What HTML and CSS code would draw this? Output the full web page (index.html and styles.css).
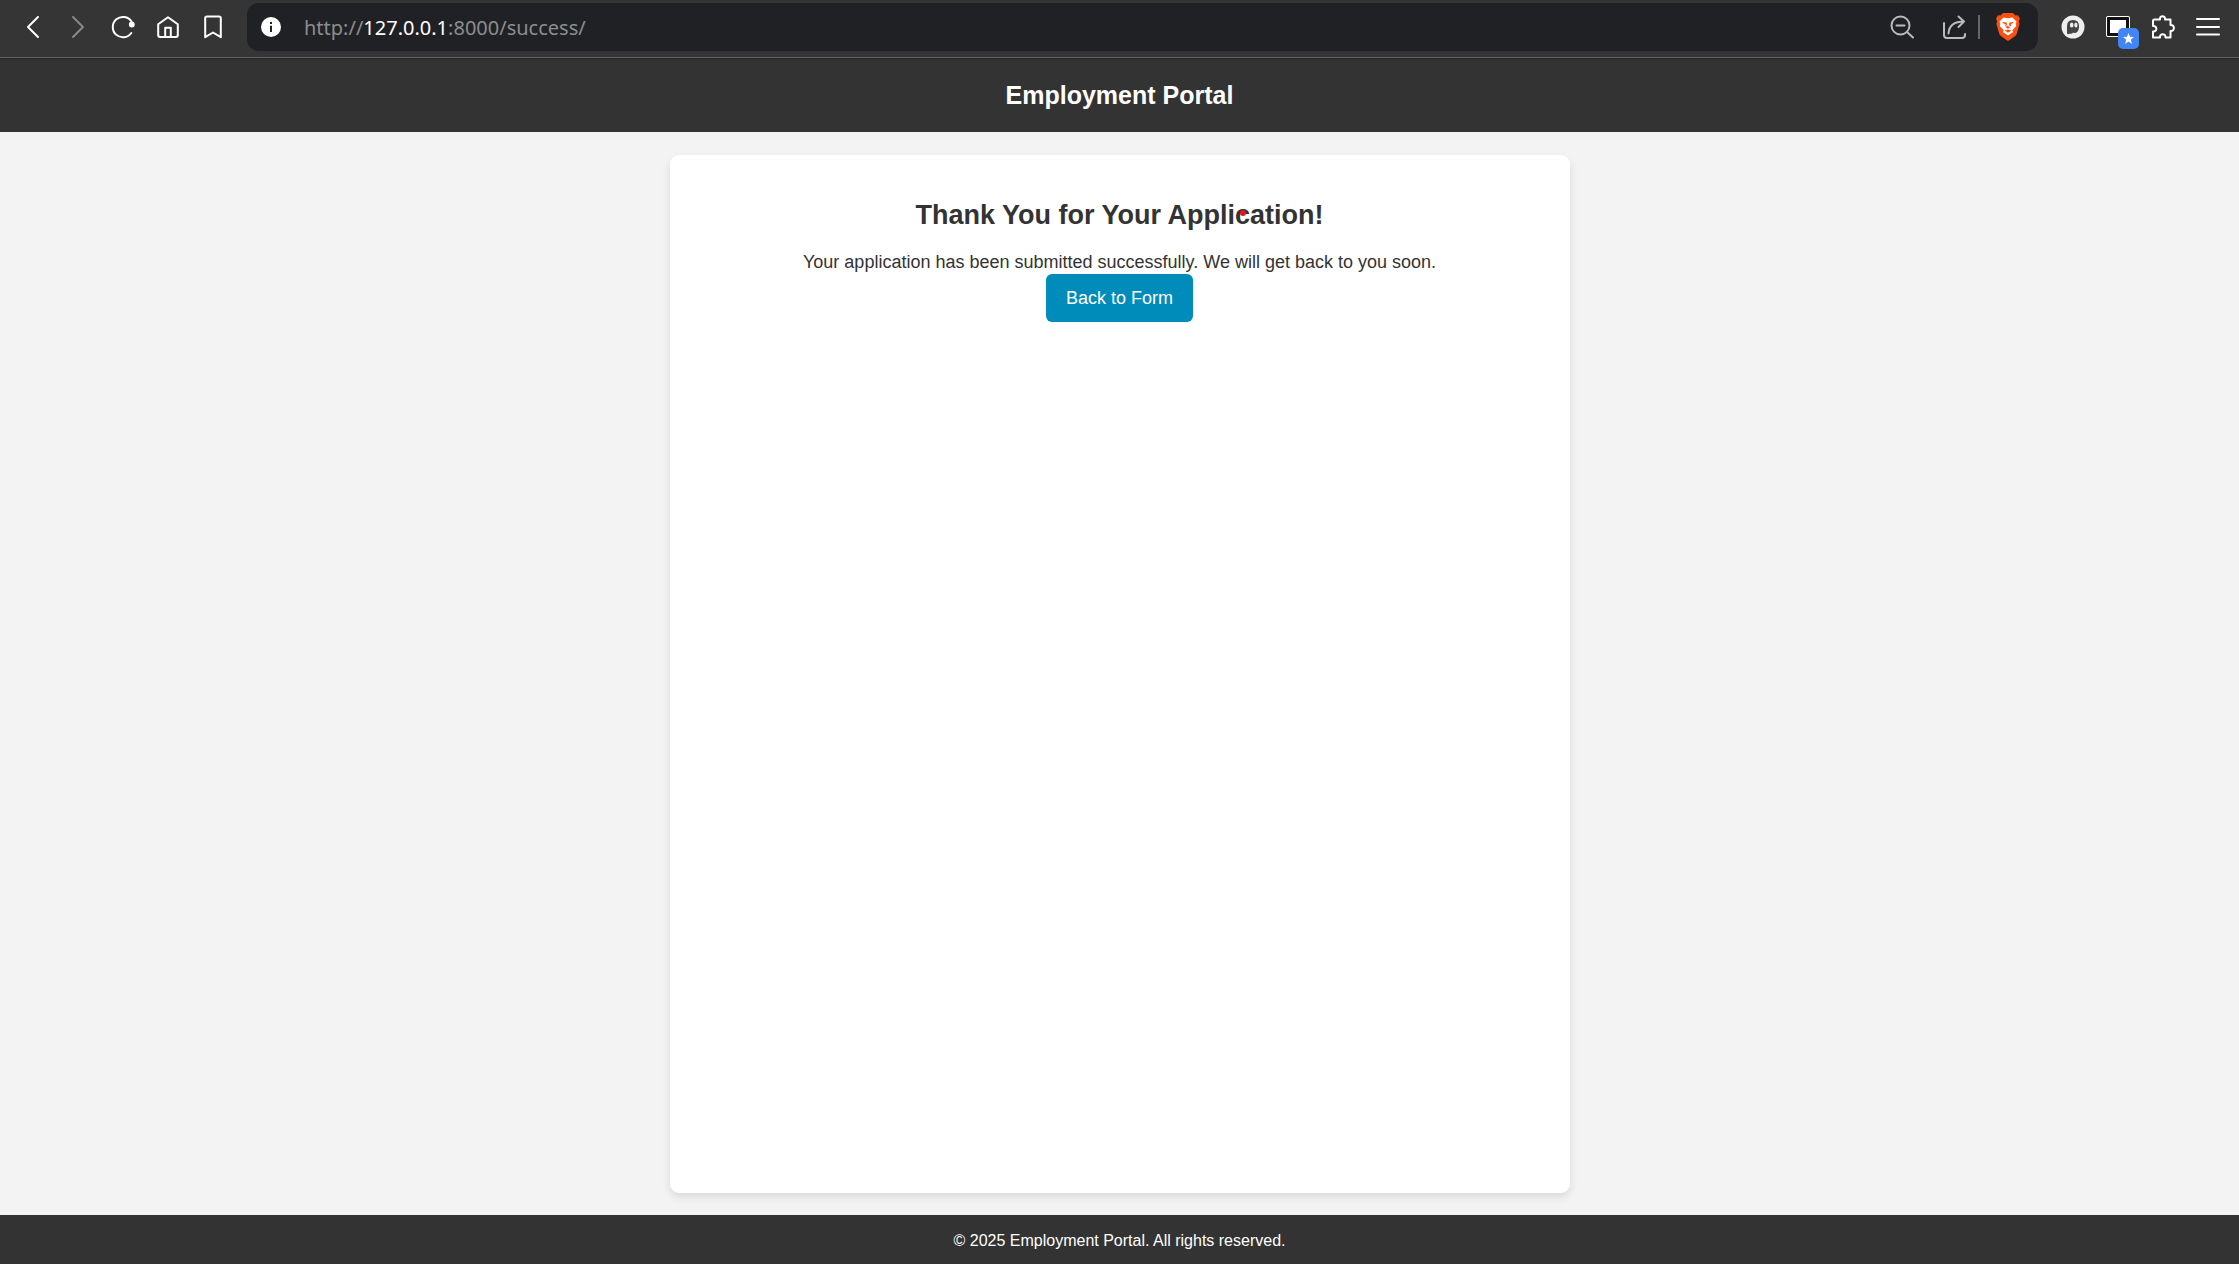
FILE: index.html
```html
<!DOCTYPE html>
<html lang="en">
<head>
<meta charset="utf-8">
<title>Employment Portal</title>
<link rel="stylesheet" href="styles.css">
</head>
<body>
<div class="toolbar">
  <nav class="tools" aria-label="Navigation">
    <button class="tool" aria-label="Back"><svg width="24" height="24" viewBox="0 0 24 24"><path d="M17 2 7 12l10 10"/></svg></button>
    <button class="tool tool-off" aria-label="Forward"><svg width="24" height="24" viewBox="0 0 24 24"><path d="m7 2 10 10L7 22"/></svg></button>
    <button class="tool" aria-label="Reload"><svg width="24" height="24" viewBox="0 0 24 24"><path d="M20.500 6.500A10.200 10.200 0 1 0 20.300 18"/><circle class="solid" cx="20.800" cy="9.500" r="2.900"/></svg></button>
    <button class="tool" aria-label="Home"><svg width="24" height="24" viewBox="0 0 24 24"><path d="M2.200 9.200 12 2.200l9.800 7V20q0 2-2 2H4.200q-2 0-2-2zM9.200 22v-9.300h5.600V22"/></svg></button>
    <button class="tool" aria-label="Bookmark"><svg width="24" height="24" viewBox="0 0 24 24"><path d="M6 1.500h12q1.800 0 1.800 1.800v18.900L12 17.500l-7.800 4.700V3.300Q4.200 1.500 6 1.500z"/></svg></button>
  </nav>
  <div class="address">
    <button class="site" aria-label="Site information"><svg class="filled" width="20" height="20" viewBox="0 0 20 20"><circle cx="10" cy="10" r="10" fill="#fff"/><path fill="#202124" d="M9 8.800h2V15H9zM9 5h2v2H9z"/></svg></button>
    <div class="url" role="textbox" aria-label="Address" contenteditable="true" spellcheck="false">http://<span class="host">127.0.0.1</span>:8000/success/</div>
    <button class="action" aria-label="Zoom out"><svg width="24" height="24" viewBox="0 0 24 24"><circle cx="10.500" cy="10.500" r="9"/><path d="m17 17 6 5.500M6.500 10.500h8"/></svg></button>
    <button class="action" aria-label="Share"><svg width="24" height="24" viewBox="0 0 24 24"><path d="M2 8v12q0 3 3 3h15q3 0 3-3v-1M6.500 18.500C7 11 11 6.500 22 6.500M16.500 1.500l5.500 5-5.500 5.500"/></svg></button>
    <span class="divider"></span>
    <button class="action" aria-label="Brave Shields"><svg class="filled" width="24" height="28" viewBox="0 0 24 28"><path fill="#fb5010" d="M7 0h10l2.500 2.500 2.500-.2 2 3.500-1.200 2.500.8 2.500-3 10.500Q19.500 23.500 12 28 4.500 23.500 3.400 21.300L.4 10.800l.8-2.500L0 5.800l2-3.500 2.500.2z"/><path fill="#fff" d="m7.500 4.500 4.500.8 4.500-.8 4 4-.8 2.500.5 2-4 4.500 1 1.500-5.200 3.500L6.800 19l1-1.500-4-4.500.5-2-.8-2.500z"/><path fill="#fb5010" d="m5.500 8.800 5 .8.500 1.500-.8 3.700 1.800 1 1.800-1-.8-3.700.5-1.500 5-.8-3.800 2.700.3 1.600-2.300.4M5.500 8.800l3.800 2.700-.3 1.600 2.300.4M8.700 17.500l3.300-1 3.300 1-3.300 2.200z"/></svg></button>
  </div>
  <nav class="tools" aria-label="Extensions">
    <button class="tool" aria-label="Ghost extension"><svg class="filled" width="24" height="24" viewBox="0 0 24 24"><circle cx="12" cy="12" r="11.500" fill="#eee"/><path fill="#444" d="M6 18.500V11q0-6 6-6t6 6q0 3.500-1 5-2 3-5 1.500-1 2-3 1-1.500 1.500-3 0z"/><ellipse cx="10.700" cy="10" rx="1.800" ry="2.600" fill="#eee"/><ellipse cx="14.900" cy="10" rx="1.600" ry="2.600" fill="#eee"/></svg></button>
    <button class="tool" aria-label="Window extension"><svg class="filled" width="24" height="24" viewBox="0 0 24 24"><path fill="#fff" d="M2 1h20q2 0 2 2v17q0 2-2 2H2q-2 0-2-2V3q0-2 2-2z"/><path fill="#111" d="M2 2h20q1 0 1 1v17q0 1-1 1H2q-1 0-1-1V3q0-1 1-1z"/><path fill="#fff" d="M4 5h16v13H4z"/></svg><span class="badge"><svg class="filled" width="11" height="11" viewBox="0 0 12 12"><path fill="#fff" d="m6 0 1.600 4.100 4.400.3-3.400 2.800L9.700 12 6 9.300 2.300 12l1.100-4.800L0 4.400l4.400-.3z"/></svg></span></button>
    <button class="tool" aria-label="Extensions"><svg width="24" height="24" viewBox="0 0 24 24"><path d="M3.500 4.500H9C8.300 0 14.700 0 14 4.500h5.500V10c4.500-.5 4.500 6.500 0 6v6.500H14.500c.5-4.500-6-4.500-5.500 0H2v-6c4.500.5 4.500-6 0-5.500V6q0-1.500 1.500-1.500z"/></svg></button>
    <button class="tool" aria-label="Menu"><svg width="24" height="24" viewBox="0 0 24 24"><path d="M1 4h22M1 12h22M1 19.500h22"/></svg></button>
  </nav>
</div>
<header class="header"><h1 class="brand">Employment Portal</h1></header>
<main class="card">
  <h2 class="title">Thank You for Your Application!</h2>
  <p class="message">Your application has been submitted successfully. We will get back to you soon.</p>
  <a class="back" href="/">Back to Form</a>
  <span class="pointer"></span>
</main>
<footer class="footer">© 2025 Employment Portal. All rights reserved.</footer>
</body>
</html>
```
FILE: styles.css
```css
* { box-sizing: border-box; }

body {
  margin: 0;
  min-height: 100vh;
  display: flex;
  flex-direction: column;
  background: #f3f3f3;
  color: #333;
  font-family: Arial, "Liberation Sans", sans-serif;
}

button {
  border: 0;
  padding: 0;
  background: none;
  color: inherit;
  font: inherit;
}

svg {
  fill: none;
  stroke: currentColor;
  stroke-width: 2;
  stroke-linejoin: round;
  stroke-linecap: round;
}
.filled { stroke: none; }
.solid { fill: currentColor; stroke: none; }

.toolbar {
  display: flex;
  gap: 12px;
  padding: 3px 9px 6px 10px;
  background: #353535;
  border-bottom: 1px solid #666;
  color: #fff;
}
.tools { display: flex; }
.tool {
  position: relative;
  width: 45px;
  display: flex;
  align-items: center;
  justify-content: center;
}
.tool-off { color: #888; }
.badge {
  position: absolute;
  right: 1px;
  bottom: 2px;
  width: 21px;
  height: 21px;
  border-radius: 5px;
  background: #4285f4;
  display: flex;
  align-items: center;
  justify-content: center;
}

.address {
  flex: 1;
  height: 48px;
  display: flex;
  align-items: center;
  padding-right: 6px;
  border-radius: 12px;
  background: #202124;
}
.site {
  width: 48px;
  height: 48px;
  display: flex;
  align-items: center;
  justify-content: center;
}
.url {
  flex: 1;
  padding: 1px 0 0 9px;
  color: #8b8d90;
  font-family: "Noto Sans", sans-serif;
  font-size: 20px;
  line-height: 28px;
}
.host { color: #fff; }
.action {
  width: 48px;
  height: 48px;
  margin-left: 4px;
  display: flex;
  align-items: center;
  justify-content: center;
  color: #bbb;
}
.divider {
  width: 2px;
  height: 24px;
  background: #666;
}

.header {
  padding: 20px;
  background: #333;
  border-top: 1px solid #222;
  color: #fff;
  text-align: center;
}
.brand {
  margin: 0;
  font-size: 25px;
  line-height: 33px;
}

.card {
  position: relative;
  flex: 1;
  width: 100%;
  max-width: 900px;
  margin: 23px auto 22px;
  padding: 43px 20px;
  border-radius: 9px;
  background: #fff;
  box-shadow: 0 4px 9px rgba(0, 0, 0, 0.1);
  text-align: center;
}
.title {
  margin: 0 0 19px;
  font-size: 27px;
  line-height: 34px;
}
.message {
  margin: 0;
  font-size: 18px;
  line-height: 23px;
}
.back {
  display: inline-block;
  padding: 12px 20px;
  border-radius: 6px;
  background: #008cba;
  color: #fff;
  font-size: 18px;
  line-height: 24px;
  text-decoration: none;
}
.pointer {
  position: absolute;
  top: 55px;
  left: calc(50% + 120px);
  width: 6px;
  height: 6px;
  border-radius: 50%;
  background: #e8141c;
}

.footer {
  padding: 15px 14px 13px;
  background: #333;
  color: #fff;
  font-size: 16px;
  line-height: 21px;
  text-align: center;
}
```
